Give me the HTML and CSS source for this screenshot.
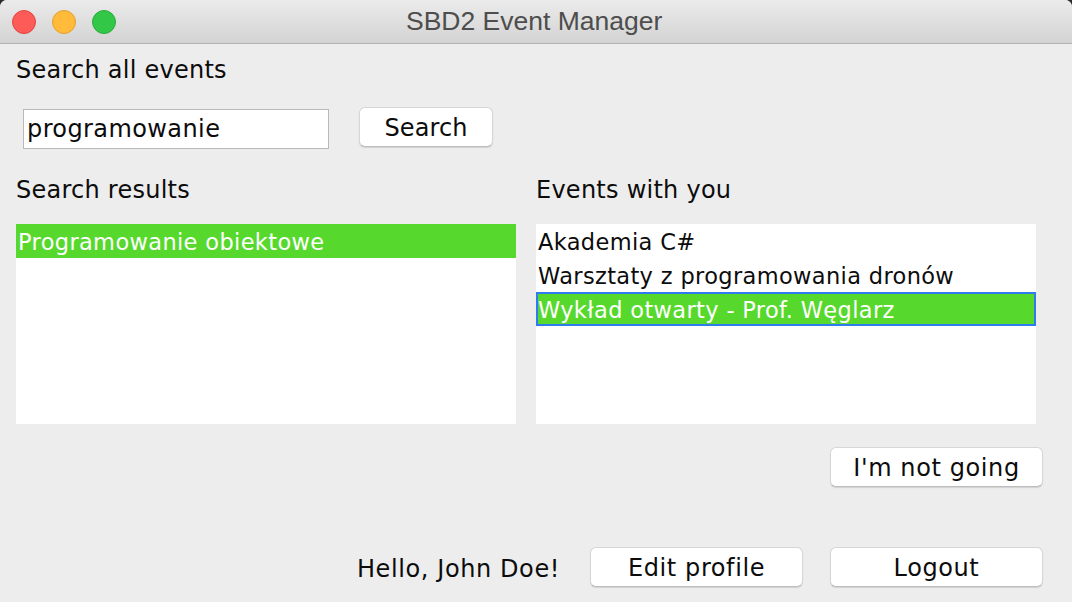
FILE: index.html
```html
<!DOCTYPE html>
<html lang="pl">
<head>
    <meta charset="UTF-8">
    <meta name="viewport" content="width=device-width, initial-scale=1.0">
    <title>SBD2 Event Manager</title>
    <link rel="stylesheet" href="styles.css">
</head>
<body>
    <div class="window">
        <header class="titlebar">
            <div class="lights">
                <span class="light light-close"></span>
                <span class="light light-min"></span>
                <span class="light light-max"></span>
            </div>
            <div class="title">SBD2 Event Manager</div>
        </header>
        <main class="content">
            <h2 class="label label-top">Search all events</h2>
            <div class="search-row">
                <input class="search-input" type="text" value="programowanie">
                <button class="btn btn-search">Search</button>
            </div>
            <div class="columns">
                <section>
                    <h2 class="label">Search results</h2>
                    <ul class="list">
                        <li class="selected">Programowanie obiektowe</li>
                    </ul>
                </section>
                <section>
                    <h2 class="label">Events with you</h2>
                    <ul class="list">
                        <li>Akademia C#</li>
                        <li>Warsztaty z programowania dronów</li>
                        <li class="selected focused">Wykład otwarty - Prof. Węglarz</li>
                    </ul>
                </section>
            </div>
            <div class="action-row">
                <button class="btn">I'm not going</button>
            </div>
            <div class="user-row">
                <span class="hello">Hello, John Doe!</span>
                <button class="btn">Edit profile</button>
                <button class="btn">Logout</button>
            </div>
        </main>
    </div>
</body>
</html>
```

FILE: styles.css
```css
* {
    box-sizing: border-box;
}
html, body {
    height: 100%;
}
body {
    margin: 0;
    background-color: #2b2b33;
    overflow: hidden;
    font-family: "DejaVu Sans", sans-serif;
    color: #0c0c0c;
}
.window {
    height: 602px;
    background-color: #ededed;
    border-radius: 7px 7px 0 0;
    overflow: hidden;
}
.titlebar {
    display: flex;
    align-items: center;
    height: 44px;
    padding-left: 12px;
    background: linear-gradient(#ebebeb, #d3d3d3);
    border-bottom: 1px solid #b4b4b4;
}
.lights {
    display: flex;
    gap: 16px;
}
.light {
    width: 24px;
    height: 24px;
    border-radius: 50%;
    border: 1px solid;
}
.light-close {
    background-color: #fc5b57;
    border-color: #e5453f;
}
.light-min {
    background-color: #ffbb39;
    border-color: #e3a02c;
}
.light-max {
    background-color: #33c748;
    border-color: #2bac3b;
}
.title {
    margin-left: 290px;
    font-family: "Liberation Sans", Arial, sans-serif;
    font-size: 26.5px;
    color: #4d4d4d;
    white-space: nowrap;
}
.content {
    padding: 0 29px 0 16px;
}
.label {
    margin: 0;
    height: 26px;
    font-size: 24px;
    font-weight: normal;
    letter-spacing: 0.25px;
    line-height: 26px;
}
.label-top {
    margin-top: 13px;
}
.search-row {
    display: flex;
    align-items: flex-start;
    margin-top: 24px;
    padding-left: 7px;
}
.search-input {
    width: 306px;
    height: 40px;
    margin: 2px 30px 0 0;
    padding: 0 3px;
    border: 1px solid #b9b9b9;
    border-radius: 0;
    background: white;
    font-family: inherit;
    font-size: 24px;
    letter-spacing: 0.4px;
    color: #0c0c0c;
    outline: none;
}
.btn {
    width: 213px;
    height: 40px;
    padding: 2px 0 0;
    background: white;
    border: 1px solid #d6d6d6;
    border-bottom-color: #bdbdbd;
    border-radius: 6px;
    box-shadow: 0 1px 1px rgba(0, 0, 0, 0.12);
    font-family: inherit;
    font-size: 24px;
    letter-spacing: 0.6px;
    color: #0c0c0c;
}
.btn-search {
    width: 134px;
    letter-spacing: 0.1px;
}
.columns {
    display: grid;
    grid-template-columns: 500px 500px;
    column-gap: 20px;
    margin-top: 28px;
}
.list {
    height: 200px;
    margin: 21px 0 0;
    padding: 0;
    background: white;
    list-style: none;
    font-size: 22.5px;
    letter-spacing: 0.35px;
}
.list li {
    height: 34px;
    padding: 1px 0 0 2px;
    line-height: 34px;
    white-space: nowrap;
}
.selected {
    background-color: #56d92c;
    color: white;
}
.list li.focused {
    padding: 1px 0 0;
    border: 2px solid #2f7bf0;
    line-height: 30px;
}
.action-row {
    display: flex;
    justify-content: flex-end;
    margin-top: 23px;
}
.user-row {
    display: flex;
    justify-content: flex-end;
    align-items: center;
    gap: 27px;
    margin-top: 60px;
}
.hello {
    margin-right: 3px;
    padding-top: 3px;
    font-size: 24px;
    letter-spacing: 0.6px;
}
```
